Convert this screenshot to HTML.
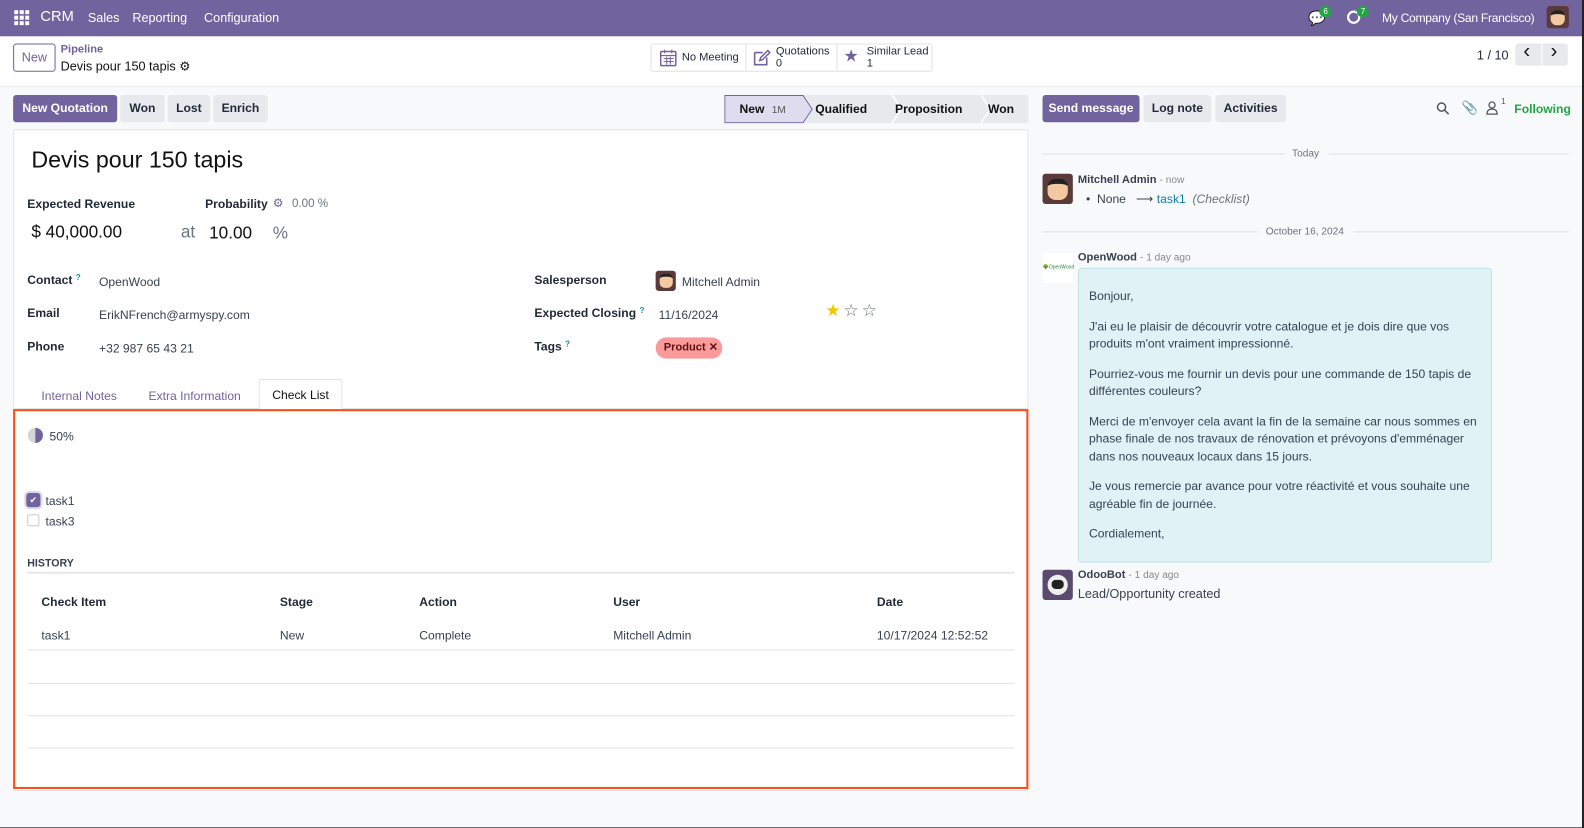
<!DOCTYPE html>
<html><head><meta charset="utf-8"><style>
*{box-sizing:border-box;margin:0;padding:0}
html,body{width:1584px;height:828px;overflow:hidden;background:#222}
#w{position:absolute;left:0;top:0;width:1568px;height:820px;transform:scale(1.0102);transform-origin:0 0;background:#f8f9fa;font-family:"Liberation Sans",sans-serif;font-size:12px;color:#374151;overflow:hidden}
.a{position:absolute;white-space:nowrap}
.nav{left:0;top:0;width:1568px;height:36px;background:#71639e;color:#fff}
.cp{left:0;top:36px;width:1568px;height:50px;background:#fff;border-bottom:1px solid #e5e7eb}
.btn{position:absolute;height:27px;line-height:27px;border-radius:3px;background:#e7e9ed;color:#1f2937;font-weight:bold;text-align:center;font-size:12px}
.pri{background:#71639e;color:#fff}
.sheet{left:13px;top:128px;width:1005px;height:655px;background:#fff;border:1px solid #e2e4e8}
.lbl{font-weight:bold;color:#1f2937}
.q{color:#0891b2;font-size:8px;vertical-align:top}
.sep{height:1px;background:#dee2e6;position:absolute}
.th{font-weight:bold;color:#1f2937}
</style></head><body><div id="w">
<div class="a nav">
 <svg class="a" style="left:14px;top:10px" width="15" height="15"><g fill="#fff"><rect x="0" y="0" width="4" height="4"/><rect x="5.5" y="0" width="4" height="4"/><rect x="11" y="0" width="4" height="4"/><rect x="0" y="5.5" width="4" height="4"/><rect x="5.5" y="5.5" width="4" height="4"/><rect x="11" y="5.5" width="4" height="4"/><rect x="0" y="11" width="4" height="4"/><rect x="5.5" y="11" width="4" height="4"/><rect x="11" y="11" width="4" height="4"/></g></svg>
 <span class="a" style="left:40px;top:9px;font-size:14.5px">CRM</span>
 <span class="a" style="left:87px;top:11px;font-size:12.5px">Sales</span>
 <span class="a" style="left:131px;top:11px;font-size:12.5px">Reporting</span>
 <span class="a" style="left:202px;top:11px;font-size:12.5px">Configuration</span>
 <span class="a" style="left:1295px;top:10px;font-size:14px">💬</span>
 <span class="a" style="left:1306px;top:6px;background:#22a447;border-radius:7px;font-size:8px;padding:1px 4px">6</span>
 <svg class="a" style="left:1333px;top:10px" width="14" height="14"><circle cx="7" cy="7" r="5.5" fill="none" stroke="#fff" stroke-width="2.2"/></svg>
 <span class="a" style="left:1343px;top:6px;background:#22a447;border-radius:7px;font-size:8px;padding:1px 4px">7</span>
 <span class="a" style="left:1368px;top:11px;font-size:12px;letter-spacing:-0.3px">My Company (San Francisco)</span>
 <div class="a" style="left:1531px;top:6px;width:22px;height:22px;border-radius:3px;background:#5a3a3a"><div style="margin:4px auto;width:14px;height:15px;border-radius:6px;background:#f2c9a0;border-top:4px solid #222"></div></div>
</div>
<div class="a cp">
 <div class="a" style="left:13px;top:7px;width:42px;height:28px;border:1px solid #71639e;border-radius:3px;color:#71639e;text-align:center;line-height:26px;font-size:12.5px">New</div>
 <span class="a" style="left:60px;top:7px;color:#71639e;font-weight:bold;font-size:11px">Pipeline</span>
 <span class="a" style="left:60px;top:22px;font-size:12.5px;color:#111">Devis pour 150 tapis ⚙</span>
 <div class="a" style="left:644px;top:7px;width:279px;height:28px;border:1px solid #dee2e6;border-radius:3px"></div>
 <div class="a" style="left:738px;top:8px;width:1px;height:26px;background:#dee2e6"></div>
 <div class="a" style="left:828px;top:8px;width:1px;height:26px;background:#dee2e6"></div>
 <svg class="a" style="left:653px;top:12px" width="17" height="18"><rect x="1" y="3" width="15" height="14" rx="1" fill="none" stroke="#71639e" stroke-width="1.5"/><path d="M1 7h15M5 1v4M12 1v4M4 10h10M4 13h10M7 8v8M10.5 8v8" stroke="#71639e" stroke-width="1"/></svg>
 <span class="a" style="left:675px;top:15px;font-size:11px;color:#1f2937">No Meeting</span>
 <svg class="a" style="left:745px;top:12px" width="18" height="18"><path d="M2 4h8M2 4v12h12v-7" fill="none" stroke="#71639e" stroke-width="1.6"/><path d="M7 12l1-3 7-7 2 2-7 7z" fill="none" stroke="#71639e" stroke-width="1.5"/></svg>
 <span class="a" style="left:768px;top:9px;font-size:11px;color:#1f2937;line-height:12px">Quotations<br>0</span>
 <span class="a" style="left:835px;top:10px;font-size:17px;color:#71639e">★</span>
 <span class="a" style="left:858px;top:9px;font-size:11px;color:#1f2937;line-height:12px">Similar Lead<br>1</span>
 <span class="a" style="left:1462px;top:12px;font-size:12.5px;color:#1f2937">1 / 10</span>
 <div class="a" style="left:1500px;top:7px;width:52px;height:22px;background:#e7e9ed;border-radius:3px"></div>
 <div class="a" style="left:1526px;top:7px;width:1px;height:22px;background:#fff"></div>
 <span class="a" style="left:1508px;top:4px;font-size:20px;color:#111">‹</span>
 <span class="a" style="left:1535px;top:4px;font-size:20px;color:#111">›</span>
</div>
<div class="btn pri" style="left:13px;top:94px;width:103px">New Quotation</div>
<div class="btn" style="left:119px;top:94px;width:44px">Won</div>
<div class="btn" style="left:166px;top:94px;width:42px">Lost</div>
<div class="btn" style="left:211px;top:94px;width:54px">Enrich</div>
<svg class="a" style="left:717px;top:94px" width="301" height="28">
 <path d="M0.5 0.5H78l9 13.5-9 13.5H0.5z" fill="#e0dcef" stroke="#71639e"/>
 <path d="M79 0H166l9 14-9 14H79l9-14z" fill="#e7e9ed"/>
 <path d="M167 0H254l9 14-9 14H167l9-14z" fill="#e7e9ed"/>
 <path d="M255 0H301V28H255l9-14z" fill="#e7e9ed"/>
 <path d="M166 0l9 14-9 14M254 0l9 14-9 14" fill="none" stroke="#fff" stroke-width="1.5"/>
</svg>
<span class="a" style="left:732px;top:101px;font-weight:bold;font-size:12px;color:#111">New <span style="font-weight:normal;font-size:10px;color:#555;margin-left:4px">1M</span></span>
<span class="a" style="left:807px;top:101px;font-weight:bold;font-size:12px;color:#111">Qualified</span>
<span class="a" style="left:886px;top:101px;font-weight:bold;font-size:12px;color:#111">Proposition</span>
<span class="a" style="left:978px;top:101px;font-weight:bold;font-size:12px;color:#111">Won</span>
<div class="btn pri" style="left:1032px;top:94px;width:96px">Send message</div>
<div class="btn" style="left:1132px;top:94px;width:67px">Log note</div>
<div class="btn" style="left:1203px;top:94px;width:70px">Activities</div>
<svg class="a" style="left:1422px;top:101px" width="13" height="13"><circle cx="5" cy="5" r="4" fill="none" stroke="#555" stroke-width="1.5"/><path d="M8 8l4 4" stroke="#555" stroke-width="1.5"/></svg>
<span class="a" style="left:1447px;top:99px;font-size:13px;color:#555">📎</span>
<svg class="a" style="left:1471px;top:100px" width="12" height="14"><circle cx="6" cy="4" r="3" fill="none" stroke="#555" stroke-width="1.3"/><path d="M1 13c0-4 2-5 5-5s5 1 5 5z" fill="none" stroke="#555" stroke-width="1.3"/></svg>
<span class="a" style="left:1486px;top:96px;font-size:8px;color:#555">1</span>
<span class="a" style="left:1499px;top:101px;font-weight:bold;font-size:12px;color:#22a447">Following</span>

<div class="a sheet"></div>
<span class="a" style="left:31px;top:145px;font-size:23px;color:#111">Devis pour 150 tapis</span>
<span class="a lbl" style="left:27px;top:195px">Expected Revenue</span>
<span class="a lbl" style="left:203px;top:195px">Probability</span>
<span class="a" style="left:270px;top:194px;color:#71639e">⚙</span>
<span class="a" style="left:289px;top:196px;color:#6b7280;font-size:11.5px">0.00 %</span>
<span class="a" style="left:31px;top:220px;font-size:17px;color:#111">$ 40,000.00</span>
<span class="a" style="left:179px;top:220px;font-size:17px;color:#6b7280">at</span>
<span class="a" style="left:207px;top:221px;font-size:17px;color:#111">10.00</span>
<span class="a" style="left:270px;top:221px;font-size:17px;color:#6b7280">%</span>
<span class="a lbl" style="left:27px;top:270px">Contact <span class="q">?</span></span>
<span class="a" style="left:98px;top:272px">OpenWood</span>
<span class="a lbl" style="left:27px;top:303px">Email</span>
<span class="a" style="left:98px;top:305px">ErikNFrench@armyspy.com</span>
<span class="a lbl" style="left:27px;top:336px">Phone</span>
<span class="a" style="left:98px;top:338px">+32 987 65 43 21</span>
<span class="a lbl" style="left:529px;top:270px">Salesperson</span>
<div class="a" style="left:649px;top:268px;width:20px;height:20px;border-radius:3px;background:#5a3a3a"><div style="margin:3px auto;width:13px;height:14px;border-radius:5px;background:#f2c9a0;border-top:3px solid #222"></div></div>
<span class="a" style="left:675px;top:272px">Mitchell Admin</span>
<span class="a lbl" style="left:529px;top:303px">Expected Closing <span class="q">?</span></span>
<span class="a" style="left:652px;top:305px">11/16/2024</span>
<span class="a" style="left:817px;top:298px;font-size:17px;color:#f3c700">★</span>
<span class="a" style="left:835px;top:298px;font-size:17px;color:#6b7280">☆</span>
<span class="a" style="left:853px;top:298px;font-size:17px;color:#6b7280">☆</span>
<span class="a lbl" style="left:529px;top:336px">Tags <span class="q">?</span></span>
<div class="a" style="left:649px;top:334px;width:66px;height:21px;border-radius:11px;background:#fb9a9a;color:#5c1010;font-weight:bold;font-size:11px;line-height:21px;padding-left:8px">Product ✕</div>
<div class="sep" style="left:14px;top:404px;width:1003px"></div>
<span class="a" style="left:41px;top:385px;color:#71639e">Internal Notes</span>
<span class="a" style="left:147px;top:385px;color:#71639e">Extra Information</span>
<div class="a" style="left:256px;top:375px;width:83px;height:31px;border:1px solid #dee2e6;border-bottom:none;background:#fff;border-radius:3px 3px 0 0;color:#111;text-align:center;line-height:31px">Check List</div>

<div class="a" style="left:13px;top:405px;width:1005px;height:376px;border:2.5px solid #ff4a12"></div>
<svg class="a" style="left:27px;top:423px" width="16" height="16"><circle cx="8" cy="8" r="7.5" fill="#d5d5d8"/><path d="M8 .5a7.5 7.5 0 0 1 0 15z" fill="#71639e"/></svg>
<span class="a" style="left:49px;top:425px">50%</span>
<div class="a" style="left:26px;top:488px;width:14px;height:14px;border-radius:3px;background:#71639e;box-shadow:0 0 0 2px #ddd8ec;color:#fff;font-size:9px;text-align:center;line-height:14px">✔</div>
<span class="a" style="left:45px;top:489px">task1</span>
<div class="a" style="left:27px;top:509px;width:12px;height:12px;border-radius:2px;border:1px solid #ccc;background:#fff"></div>
<span class="a" style="left:45px;top:509px">task3</span>
<span class="a" style="left:27px;top:552px;font-weight:bold;font-size:10.5px;color:#374151">HISTORY</span>
<div class="sep" style="left:27px;top:566px;width:977px;height:2px;background:#e5e7eb"></div>
<span class="a th" style="left:41px;top:589px">Check Item</span>
<span class="a th" style="left:277px;top:589px">Stage</span>
<span class="a th" style="left:415px;top:589px">Action</span>
<span class="a th" style="left:607px;top:589px">User</span>
<span class="a th" style="left:868px;top:589px">Date</span>
<span class="a" style="left:41px;top:622px">task1</span>
<span class="a" style="left:277px;top:622px">New</span>
<span class="a" style="left:415px;top:622px">Complete</span>
<span class="a" style="left:607px;top:622px">Mitchell Admin</span>
<span class="a" style="left:868px;top:622px">10/17/2024 12:52:52</span>
<div class="sep" style="left:27px;top:643px;width:977px"></div>
<div class="sep" style="left:27px;top:676px;width:977px"></div>
<div class="sep" style="left:27px;top:708px;width:977px"></div>
<div class="sep" style="left:27px;top:740px;width:977px"></div>

<div class="sep" style="left:1032px;top:152px;width:240px"></div>
<span class="a" style="left:1279px;top:147px;font-size:10px;color:#6b7280">Today</span>
<div class="sep" style="left:1315px;top:152px;width:238px"></div>
<div class="a" style="left:1032px;top:172px;width:30px;height:30px;border-radius:3px;background:#5a3a3a"><div style="margin:5px auto;width:20px;height:21px;border-radius:8px;background:#f2c9a0;border-top:5px solid #222"></div></div>
<span class="a" style="left:1067px;top:172px;font-weight:bold;font-size:11px;color:#374151">Mitchell Admin <span style="font-weight:normal;color:#888;font-size:10px">- now</span></span>
<span class="a" style="left:1075px;top:190px;font-size:12px">•&nbsp;&nbsp;None&nbsp;&nbsp;&nbsp;⟶ <span style="color:#0e7da5">task1</span>&nbsp;&nbsp;<i style="color:#6b7280">(Checklist)</i></span>
<div class="sep" style="left:1032px;top:229px;width:213px"></div>
<span class="a" style="left:1253px;top:224px;font-size:10px;color:#6b7280">October 16, 2024</span>
<div class="sep" style="left:1340px;top:229px;width:213px"></div>
<div class="a" style="left:1032px;top:250px;width:30px;height:30px;background:#fff;color:#2a8a3a;font-size:5px;line-height:30px;text-align:center">🌳OpenWood</div>
<span class="a" style="left:1067px;top:249px;font-weight:bold;font-size:11px;color:#374151">OpenWood <span style="font-weight:normal;color:#888;font-size:10px">- 1 day ago</span></span>
<div class="a" style="left:1067px;top:265px;width:410px;height:292px;background:#e0f2f5;border:1px solid #bfe3ea;border-radius:4px"></div>
<div class="a" style="left:1078px;top:285px;white-space:normal;width:390px;font-size:12px;line-height:17.5px;color:#374151">
<p>Bonjour,</p>
<p style="margin-top:12px">J'ai eu le plaisir de découvrir votre catalogue et je dois dire que vos produits m'ont vraiment impressionné.</p>
<p style="margin-top:12px">Pourriez-vous me fournir un devis pour une commande de 150 tapis de différentes couleurs?</p>
<p style="margin-top:12px">Merci de m'envoyer cela avant la fin de la semaine car nous sommes en phase finale de nos travaux de rénovation et prévoyons d'emménager dans nos nouveaux locaux dans 15 jours.</p>
<p style="margin-top:12px">Je vous remercie par avance pour votre réactivité et vous souhaite une agréable fin de journée.</p>
<p style="margin-top:12px">Cordialement,</p>
</div>
<div class="a" style="left:1032px;top:564px;width:30px;height:30px;border-radius:3px;background:#5b4a70"><div style="margin:5px auto;width:20px;height:20px;border-radius:10px;background:#eee"><div style="margin:5px auto 0;width:12px;height:9px;border-radius:4px;background:#222;position:relative;top:5px"></div></div></div>
<span class="a" style="left:1067px;top:563px;font-weight:bold;font-size:11px;color:#374151">OdooBot <span style="font-weight:normal;color:#888;font-size:10px">- 1 day ago</span></span>
<span class="a" style="left:1067px;top:581px;font-size:12.5px">Lead/Opportunity created</span>
<div class="a" style="left:1566px;top:0;width:2px;height:820px;background:#222"></div>
<div class="a" style="left:0;top:819px;width:1568px;height:1px;background:#222"></div>
</div></body></html>
